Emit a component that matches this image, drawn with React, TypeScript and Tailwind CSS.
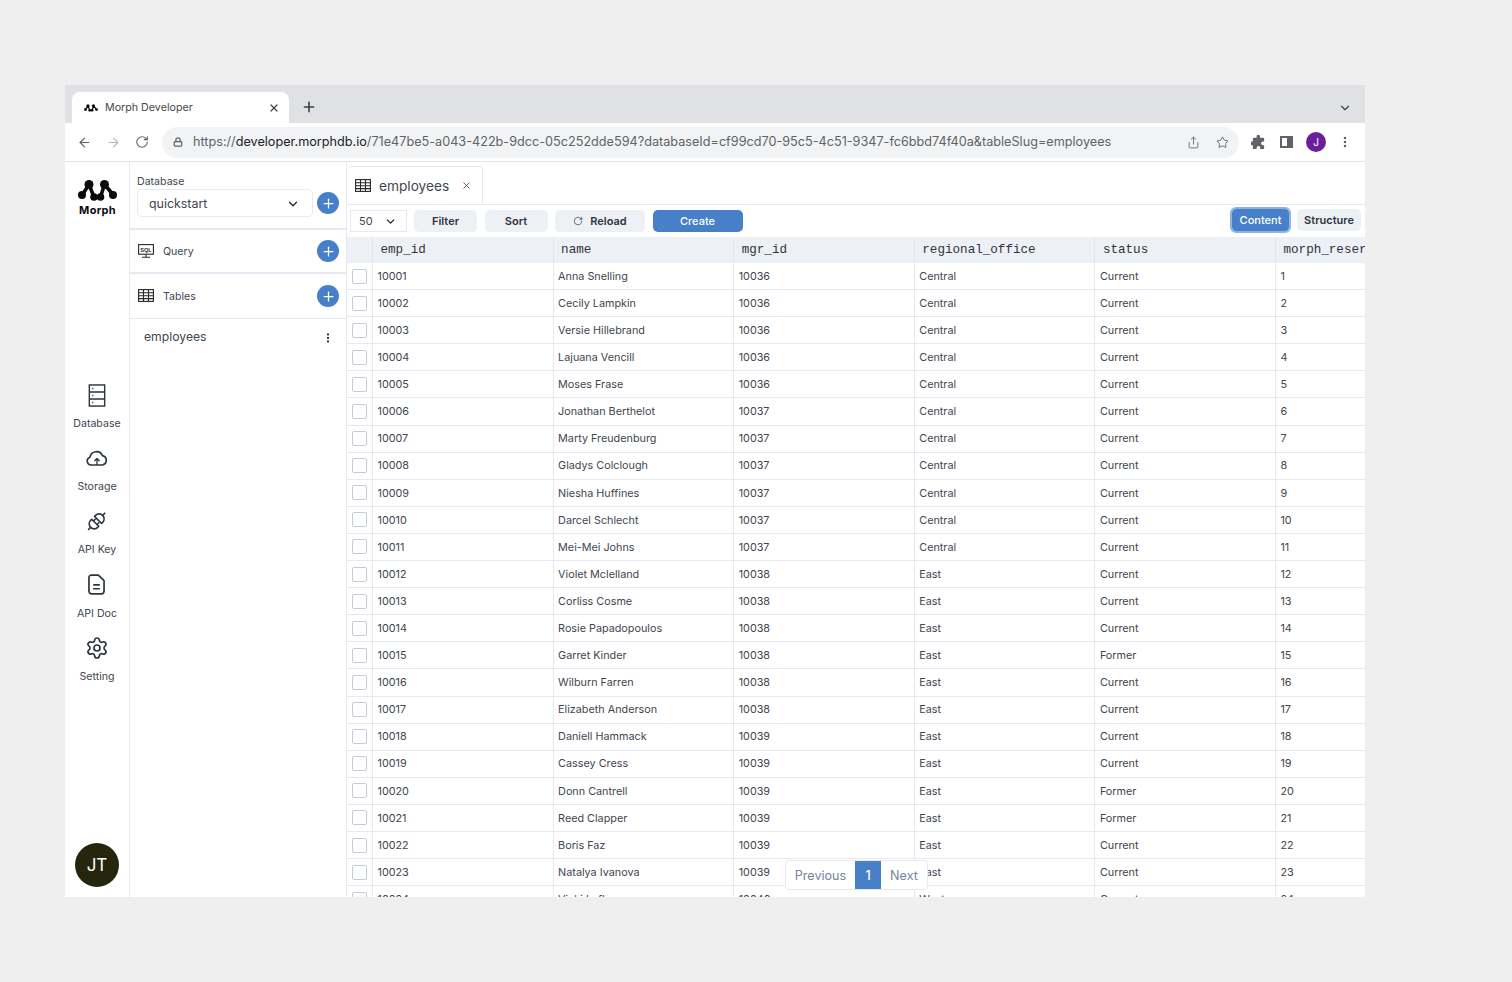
import { ArrowLeft, ArrowRight, ChevronDown, EllipsisVertical, Lock, Plus, RotateCw, Settings, Share, Star, X } from "lucide-react";

const ROWS = [
  ["10001", "Anna Snelling", "10036", "Central", "Current"],
  ["10002", "Cecily Lampkin", "10036", "Central", "Current"],
  ["10003", "Versie Hillebrand", "10036", "Central", "Current"],
  ["10004", "Lajuana Vencill", "10036", "Central", "Current"],
  ["10005", "Moses Frase", "10036", "Central", "Current"],
  ["10006", "Jonathan Berthelot", "10037", "Central", "Current"],
  ["10007", "Marty Freudenburg", "10037", "Central", "Current"],
  ["10008", "Gladys Colclough", "10037", "Central", "Current"],
  ["10009", "Niesha Huffines", "10037", "Central", "Current"],
  ["10010", "Darcel Schlecht", "10037", "Central", "Current"],
  ["10011", "Mei-Mei Johns", "10037", "Central", "Current"],
  ["10012", "Violet Mclelland", "10038", "East", "Current"],
  ["10013", "Corliss Cosme", "10038", "East", "Current"],
  ["10014", "Rosie Papadopoulos", "10038", "East", "Current"],
  ["10015", "Garret Kinder", "10038", "East", "Former"],
  ["10016", "Wilburn Farren", "10038", "East", "Current"],
  ["10017", "Elizabeth Anderson", "10038", "East", "Current"],
  ["10018", "Daniell Hammack", "10039", "East", "Current"],
  ["10019", "Cassey Cress", "10039", "East", "Current"],
  ["10020", "Donn Cantrell", "10039", "East", "Former"],
  ["10021", "Reed Clapper", "10039", "East", "Former"],
  ["10022", "Boris Faz", "10039", "East", "Current"],
  ["10023", "Natalya Ivanova", "10039", "East", "Current"],
  ["10024", "Vicki Laflamme", "10040", "West", "Current"],
];

const HEADERS = ["emp_id", "name", "mgr_id", "regional_office", "status"];

function TableIcon({ className }: { className?: string }) {
  return (
    <svg viewBox="0 0 16 13" className={className} fill="none" stroke="#27272a" strokeWidth="1.1">
      <rect x="0.6" y="0.6" width="14.8" height="11.8" />
      <path d="M0.6 3.8H15.4M0.6 6.7H15.4M0.6 9.6H15.4M5.5 0.6V12.4M10.5 0.6V12.4" />
    </svg>
  );
}

function MorphLogo({ className }: { className?: string }) {
  return (
    <svg viewBox="0 0 39 21" className={className} fill="#0b0b0b">
      <path d="M11 4.5 4.5 14.5M11 4.5 16 17M26.5 4.5 22.5 17M26.5 4.5 35 14.5" stroke="#0b0b0b" strokeWidth="3.6" fill="none" />
      <circle cx="11" cy="4.5" r="4.5" />
      <circle cx="26.5" cy="4.5" r="4.5" />
      <circle cx="4" cy="15" r="4" />
      <circle cx="16" cy="17" r="3.8" />
      <circle cx="22.5" cy="17" r="3.8" />
      <circle cx="35" cy="15" r="4" />
    </svg>
  );
}

function AddButton() {
  return (
    <button className="flex h-[22px] w-[22px] items-center justify-center rounded-full bg-[#4780c8] text-white">
      <Plus size={15} strokeWidth={2} />
    </button>
  );
}

function NavItem({ label, icon }: { label: string; icon: React.ReactNode }) {
  return (
    <div className="flex h-[63.2px] flex-col items-center">
      <div className="flex h-[28px] items-center justify-center">{icon}</div>
      <div className="mt-[8px] text-[10.6px] leading-[14px] text-[#3f4650]">{label}</div>
    </div>
  );
}

function Cell({ children, last }: { children?: React.ReactNode; last?: boolean }) {
  return (
    <div className={`h-full shrink-0 pl-[4.5px] pt-[1.6px] ${last ? "w-[90px]" : "w-[180.6px] border-r border-[#e6e9f1]"} flex items-center overflow-hidden whitespace-nowrap`}>
      {children}
    </div>
  );
}

export default function App() {
  return (
    <div className="h-[982px] w-[1512px] overflow-hidden bg-[#efefef] pl-[65px] pt-[85px] font-['Inter',sans-serif]">
      <div className="flex h-[812px] w-[1300px] flex-col overflow-hidden bg-white">
        {/* browser chrome */}
        <div className="flex h-[38px] shrink-0 items-end bg-[#dfe1e5] pl-[7px]">
          <div className="flex h-[31px] w-[217px] items-center rounded-t-[8px] bg-white pl-[12px] pr-[9px]">
            <MorphLogo className="h-[8px] w-[14px]" />
            <span className="ml-[7px] flex-1 pt-px text-[10.7px] text-[#45494e]">Morph Developer</span>
            <X size={12} strokeWidth={2.4} className="text-[#3c4043]" />
          </div>
          <Plus size={16} strokeWidth={2.4} className="mb-[8px] ml-[12px] text-[#3c4043]" />
          <ChevronDown size={14} strokeWidth={2} className="mb-[8px] ml-auto mr-[13px] text-[#3c4043]" />
        </div>
        <div className="flex h-[39px] shrink-0 items-center border-b border-[#e2e4e8] bg-white pl-[12px]">
          <ArrowLeft size={15} strokeWidth={1.8} className="text-[#5f6368]" />
          <ArrowRight size={15} strokeWidth={1.8} className="ml-[14px] text-[#b5b8bc]" />
          <RotateCw size={14} strokeWidth={1.9} className="ml-[14px] text-[#5f6368]" />
          <div className="ml-[13px] flex h-[31px] w-[1077px] items-center rounded-full bg-[#f1f3f4] pl-[11px] pr-[10px]">
            <Lock size={10} strokeWidth={3} className="text-[#5f6368]" />
            <div className="ml-[10px] flex-1 whitespace-nowrap text-[12.66px] text-[#5f6368]">
              https://<span className="text-[#202124]">developer.morphdb.io</span>/71e47be5-a043-422b-9dcc-05c252dde594?databaseId=cf99cd70-95c5-4c51-9347-fc6bbd74f40a&amp;tableSlug=employees
            </div>
            <Share size={13} strokeWidth={1.6} className="text-[#5f6368]" />
            <Star size={13} strokeWidth={1.7} className="ml-[16px] text-[#5f6368]" />
          </div>
          <svg viewBox="0 0 16 16" className="ml-[12px] h-[15px] w-[15px]" fill="#5f6368">
            <path d="M6 1.5a1.8 1.8 0 0 1 3.6 0V3H13a1 1 0 0 1 1 1v3h-1.3a1.9 1.9 0 0 0 0 3.8H14V14a1 1 0 0 1-1 1H9.8v-1.3a1.9 1.9 0 0 0-3.8 0V15H3a1 1 0 0 1-1-1v-3.2H.8a1.9 1.9 0 0 1 0-3.8H2V4a1 1 0 0 1 1-1h3V1.5Z" />
          </svg>
          <div className="ml-[14px] flex h-[12px] w-[13px] justify-end border-2 border-[#5f6368]">
            <div className="h-full w-[4px] bg-[#5f6368]" />
          </div>
          <div className="ml-[13px] flex h-[20px] w-[20px] items-center justify-center rounded-full bg-[#6a1f9a] text-[10px] text-white">J</div>
          <EllipsisVertical size={14} strokeWidth={2.4} className="ml-[12px] text-[#5f6368]" />
        </div>

        <div className="relative flex min-h-0 flex-1">
          {/* icon rail */}
          <div className="flex w-[65px] shrink-0 flex-col items-center border-r border-[#e6e9f1] pt-[18px]">
            <MorphLogo className="h-[21px] w-[39px]" />
            <div className="mt-[3px] pl-px text-[11px] font-bold leading-[13px] tracking-[0.3px] text-[#0b0b0b]">Morph</div>
            <div className="mt-[164px] flex flex-col items-center">
              <NavItem
                label="Database"
                icon={
                  <svg viewBox="0 0 18 24" className="h-[23px] w-[18px]" fill="none" stroke="#2d3540" strokeWidth="1.5">
                    <rect x="1" y="1" width="16" height="22" />
                    <path d="M1 8.3H17M1 15.6H17M4 4.6h1.2M4 12h1.2M4 19.4h1.2" />
                  </svg>
                }
              />
              <NavItem
                label="Storage"
                icon={
                  <svg viewBox="0 0 22 16" className="h-[16px] w-[22px]" fill="none" stroke="#2d3540" strokeWidth="1.7" strokeLinejoin="round">
                    <path d="M6 15H5a4 4 0 0 1-1-7.8A6.5 6.5 0 0 1 16.4 5.6 4.8 4.8 0 0 1 16.5 15H6Z" />
                    <path d="M11 15V9M8.4 11 11 8.5l2.6 2.5" strokeWidth="1.3" />
                  </svg>
                }
              />
              <NavItem
                label="API Key"
                icon={
                  <svg viewBox="0 0 22 22" className="h-[22px] w-[22px]" fill="none" stroke="#2d3540" strokeWidth="1.6" strokeLinejoin="round" strokeLinecap="round">
                    <g transform="rotate(45 11 11)">
                      <path d="M6 9.5h10V8a5 5 0 0 0-10 0v1.5Z" />
                      <path d="M11 3V0" />
                      <path d="M6 13.5h10V15a5 5 0 0 1-10 0v-1.5Z" />
                      <path d="M8.5 13.5V11M13.5 13.5V11M11 20v3" />
                    </g>
                  </svg>
                }
              />
              <NavItem
                label="API Doc"
                icon={
                  <svg viewBox="0 0 18 22" className="h-[21px] w-[17px]" fill="none" stroke="#2d3540" strokeWidth="1.8" strokeLinejoin="round">
                    <path d="M3.5 1H11l6 6v11a3 3 0 0 1-3 3H4a3 3 0 0 1-3-3V3.5A2.5 2.5 0 0 1 3.5 1Z" />
                    <path d="M5.5 11.5h7M5.5 15.5h7" />
                  </svg>
                }
              />
              <NavItem label="Setting" icon={<Settings size={24} strokeWidth={1.7} className="text-[#2d3540]" />} />
            </div>
            <div className="mt-auto mb-[10px] flex h-[44px] w-[44px] items-center justify-center rounded-full bg-[#26260f] pt-px text-[17px] text-white">JT</div>
          </div>

          {/* database panel */}
          <div className="w-[217px] shrink-0 border-r border-[#e6e9f1] text-[#3f4650]">
            <div className="flex h-[68px] flex-col border-b-2 border-[#e6e9f1] px-[7px] pt-[13px]">
              <div className="text-[10.6px] leading-[13px]">Database</div>
              <div className="mt-px flex items-center justify-between">
                <div className="flex h-[28px] w-[176px] items-center justify-between rounded-[5px] border border-[#e6e9f1] pl-[11px] pr-[12px] pt-[2px] text-[12.4px]">
                  quickstart
                  <ChevronDown size={14} strokeWidth={2.2} className="text-[#1f2937]" />
                </div>
                <AddButton />
              </div>
            </div>
            <div className="flex h-[44px] items-center justify-between border-b-2 border-[#e6e9f1] pl-[8px] pr-[7px]">
              <div className="flex items-center text-[10.6px]">
                <svg viewBox="0 0 16 14" className="mr-[9px] h-[14px] w-[16px]" fill="none" stroke="#27272a" strokeWidth="1.1">
                  <rect x="0.6" y="0.6" width="14.8" height="9.6" />
                  <path d="M8 10.2V13M4 13.2H12" />
                  <text x="8" y="7.6" textAnchor="middle" fontSize="5.6" fontWeight="700" fontFamily="Liberation Sans" fill="#27272a" stroke="none">SQL</text>
                </svg>
                <span className="pt-[2px]">Query</span>
              </div>
              <AddButton />
            </div>
            <div className="flex h-[45px] items-center justify-between border-b border-[#e6e9f1] pl-[8px] pr-[7px]">
              <div className="flex items-center text-[10.6px]">
                <TableIcon className="mr-[9px] h-[13px] w-[16px]" />
                <span className="pt-[2px]">Tables</span>
              </div>
              <AddButton />
            </div>
            <div className="flex h-[37px] items-center justify-between pl-[14px] pr-[12px] text-[12.2px]">
              employees
              <EllipsisVertical size={12} strokeWidth={2.6} className="text-[#2d3540]" />
            </div>
          </div>

          {/* main */}
          <div className="relative min-w-0 flex-1 overflow-hidden">
            <div className="flex h-[43px] items-end border-b border-[#e6e9f1] pl-px">
              <div className="flex h-[38px] w-[135px] items-center rounded-t-[4px] border-r border-t border-[#e6e9f1] pl-[7px] pr-[10px] text-[#3f4650]">
                <TableIcon className="h-[13px] w-[16px]" />
                <span className="ml-[8px] flex-1 pt-px text-[13.7px]">employees</span>
                <X size={11} strokeWidth={1.8} />
              </div>
            </div>
            <div className="flex h-[32px] items-center pl-[3px] pr-[4px]">
              <div className="flex h-[22px] w-[57px] items-center justify-between border border-[#e6e9f1] pl-[8px] pr-[9px] text-[11px] text-[#3f4650]">
                50
                <ChevronDown size={13} strokeWidth={2.4} className="text-[#1f2937]" />
              </div>
              <div className="ml-[7px] flex gap-[7.5px]">
                <button className="flex h-[22px] w-[63px] items-center justify-center rounded-[5px] bg-[#edf0f5] text-[11px] font-semibold text-[#2e3440]">Filter</button>
                <button className="flex h-[22px] w-[63px] items-center justify-center rounded-[5px] bg-[#edf0f5] text-[11px] font-semibold text-[#2e3440]">Sort</button>
                <button className="flex h-[22px] w-[90px] items-center justify-center rounded-[5px] bg-[#edf0f5] text-[11px] font-semibold text-[#2e3440]">
                  <RotateCw size={10} strokeWidth={1.6} className="mr-[7px]" />
                  Reload
                </button>
              </div>
              <button className="ml-[7.5px] h-[22px] w-[90px] rounded-[5px] bg-[#4780c8] text-[11px] font-medium text-white">Create</button>
              <button className="mb-[2px] ml-auto h-[22px] w-[57px] rounded-[4px] bg-[#4780c8] text-[11px] font-medium text-white outline-2 outline-[#8fb4e3]">Content</button>
              <button className="mb-[2px] ml-[8px] h-[22px] w-[64px] rounded-[5px] bg-[#edf0f5] text-[11px] font-semibold text-[#2e3440]">Structure</button>
            </div>

            <div className="flex h-[26px] items-center bg-[#edf0f5] font-['Liberation_Mono',monospace] text-[12.6px] text-[#2e3440]">
              <div className="h-full w-[26px] shrink-0 border-r border-[#e2e6ee]" />
              {HEADERS.map((h) => (
                <div key={h} className="flex h-full w-[180.6px] shrink-0 items-center border-r border-[#e2e6ee] pl-[7.5px]">{h}</div>
              ))}
              <div className="flex h-full shrink-0 items-center whitespace-nowrap pl-[7.5px]">morph_reserved</div>
            </div>

            {ROWS.map((r, i) => (
              <div key={r[0]} className="flex h-[27.1px] items-center border-b border-[#e6e9f1] text-[10.8px] text-[#3f4650]">
                <div className="flex h-full w-[26px] shrink-0 items-center justify-center border-r border-[#e6e9f1]">
                  <div className="h-[15px] w-[15px] rounded-[2px] border border-[#c3cad8] bg-white" />
                </div>
                {r.map((c, j) => (
                  <Cell key={j}>{c}</Cell>
                ))}
                <Cell last>{i + 1}</Cell>
              </div>
            ))}

            <div className="absolute bottom-[7px] left-[438px] flex h-[30px] w-[143px] items-center overflow-hidden rounded-[4px] border border-[#e6e9f1] bg-white text-[12.6px] text-[#76849b]">
              <div className="flex h-full w-[69px] items-center justify-center pt-[2px]">Previous</div>
              <div className="flex h-full w-[26px] items-center justify-center bg-[#4780c8] pt-[2px] font-medium text-white">1</div>
              <div className="flex h-full flex-1 items-center justify-center pt-[2px]">Next</div>
            </div>
          </div>
        </div>
      </div>
    </div>
  );
}
